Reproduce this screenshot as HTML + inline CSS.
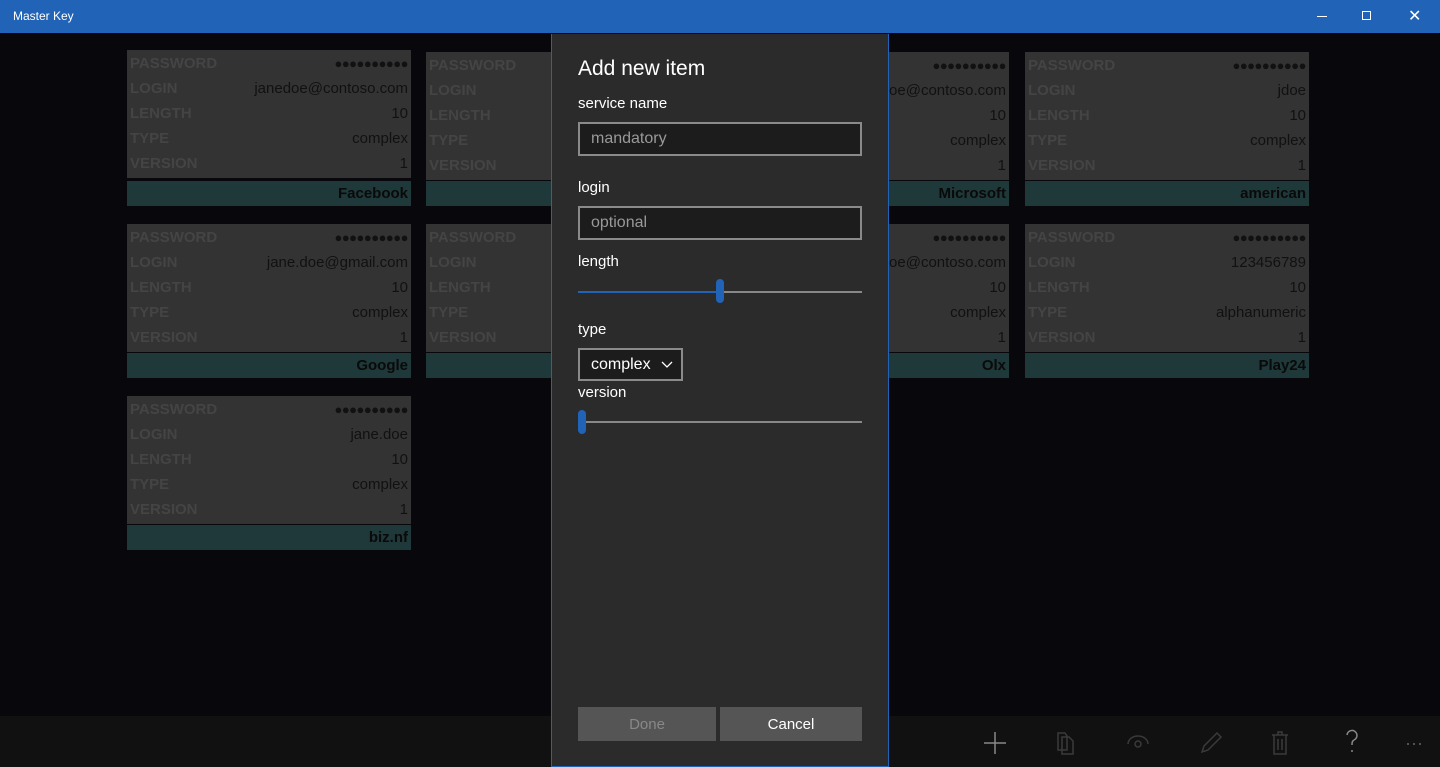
<!DOCTYPE html>
<html><head><meta charset="utf-8"><style>
*{margin:0;padding:0;box-sizing:border-box}
body{width:1440px;height:767px;background:#07070c;position:relative;overflow:hidden;font-family:"Segoe UI","Liberation Sans",sans-serif}
.tb{position:absolute;left:0;top:0;width:1440px;height:33px;background:#2163b7;color:#fff;font-size:12px}
.card{position:absolute;width:284px;height:128px;background:#333}
.r{position:absolute;left:3px;right:3px;height:25px;font-size:15px;line-height:27px}
.r b{color:#444;font-weight:bold;font-size:15px}
.r span{position:absolute;right:0;top:0;color:#111}
.r span.d{font-size:13px;letter-spacing:-0.5px}
.bar{position:absolute;width:284px;height:25px;background:#1f3839;color:#0a0a0a;font-weight:bold;font-size:15px;line-height:25px;text-align:right;padding-right:3px}
.app{position:absolute;left:0;top:716px;width:1440px;height:51px;background:#111}
.dlg{position:absolute;left:551px;top:34px;width:338px;height:733px;background:#2b2b2b;border:1px solid #2163b7;border-top:none;color:#fff}
.lbl{position:absolute;left:26px;font-size:15px}
.inp{position:absolute;left:26px;width:284px;height:34px;border:2px solid #8a8a8a;background:#1c1c1c;color:#999;font-size:16px;line-height:30px;padding-left:11px}
.btn{position:absolute;top:673px;height:34px;background:#555;font-size:15px;line-height:36px;text-align:center}
</style></head><body>
<div class="tb"><div style="position:absolute;left:13px;top:9px">Master Key</div>
<div style="position:absolute;left:1317px;top:16px;width:10px;height:1px;background:#fff"></div>
<div style="position:absolute;left:1362px;top:11px;width:9px;height:9px;border:1px solid #fff"></div>
<div style="position:absolute;left:1408px;top:6px;font-size:16px">✕</div></div>

<!-- col1 -->
<div class="card" style="left:127px;top:50px">
<div class="r" style="top:0"><b>PASSWORD</b><span class="d">●●●●●●●●●●</span></div>
<div class="r" style="top:25px"><b>LOGIN</b><span>janedoe@contoso.com</span></div>
<div class="r" style="top:50px"><b>LENGTH</b><span>10</span></div>
<div class="r" style="top:75px"><b>TYPE</b><span>complex</span></div>
<div class="r" style="top:100px"><b>VERSION</b><span>1</span></div></div>
<div class="bar" style="left:127px;top:181px">Facebook</div>
<div class="card" style="left:127px;top:224px">
<div class="r" style="top:0"><b>PASSWORD</b><span class="d">●●●●●●●●●●</span></div>
<div class="r" style="top:25px"><b>LOGIN</b><span>jane.doe@gmail.com</span></div>
<div class="r" style="top:50px"><b>LENGTH</b><span>10</span></div>
<div class="r" style="top:75px"><b>TYPE</b><span>complex</span></div>
<div class="r" style="top:100px"><b>VERSION</b><span>1</span></div></div>
<div class="bar" style="left:127px;top:353px">Google</div>
<div class="card" style="left:127px;top:396px">
<div class="r" style="top:0"><b>PASSWORD</b><span class="d">●●●●●●●●●●</span></div>
<div class="r" style="top:25px"><b>LOGIN</b><span>jane.doe</span></div>
<div class="r" style="top:50px"><b>LENGTH</b><span>10</span></div>
<div class="r" style="top:75px"><b>TYPE</b><span>complex</span></div>
<div class="r" style="top:100px"><b>VERSION</b><span>1</span></div></div>
<div class="bar" style="left:127px;top:525px">biz.nf</div>
<!-- col2 -->
<div class="card" style="left:426px;top:52px">
<div class="r" style="top:0"><b>PASSWORD</b></div><div class="r" style="top:25px"><b>LOGIN</b></div><div class="r" style="top:50px"><b>LENGTH</b></div><div class="r" style="top:75px"><b>TYPE</b></div><div class="r" style="top:100px"><b>VERSION</b></div></div>
<div class="bar" style="left:426px;top:181px"></div>
<div class="card" style="left:426px;top:224px">
<div class="r" style="top:0"><b>PASSWORD</b></div><div class="r" style="top:25px"><b>LOGIN</b></div><div class="r" style="top:50px"><b>LENGTH</b></div><div class="r" style="top:75px"><b>TYPE</b></div><div class="r" style="top:100px"><b>VERSION</b></div></div>
<div class="bar" style="left:426px;top:353px"></div>
<!-- col3 -->
<div class="card" style="left:725px;top:52px">
<div class="r" style="top:0"><span class="d">●●●●●●●●●●</span></div>
<div class="r" style="top:25px"><span>janedoe@contoso.com</span></div>
<div class="r" style="top:50px"><span>10</span></div>
<div class="r" style="top:75px"><span>complex</span></div>
<div class="r" style="top:100px"><span>1</span></div></div>
<div class="bar" style="left:725px;top:181px">Microsoft</div>
<div class="card" style="left:725px;top:224px">
<div class="r" style="top:0"><span class="d">●●●●●●●●●●</span></div>
<div class="r" style="top:25px"><span>janedoe@contoso.com</span></div>
<div class="r" style="top:50px"><span>10</span></div>
<div class="r" style="top:75px"><span>complex</span></div>
<div class="r" style="top:100px"><span>1</span></div></div>
<div class="bar" style="left:725px;top:353px">Olx</div>
<!-- col4 -->
<div class="card" style="left:1025px;top:52px">
<div class="r" style="top:0"><b>PASSWORD</b><span class="d">●●●●●●●●●●</span></div>
<div class="r" style="top:25px"><b>LOGIN</b><span>jdoe</span></div>
<div class="r" style="top:50px"><b>LENGTH</b><span>10</span></div>
<div class="r" style="top:75px"><b>TYPE</b><span>complex</span></div>
<div class="r" style="top:100px"><b>VERSION</b><span>1</span></div></div>
<div class="bar" style="left:1025px;top:181px">american</div>
<div class="card" style="left:1025px;top:224px">
<div class="r" style="top:0"><b>PASSWORD</b><span class="d">●●●●●●●●●●</span></div>
<div class="r" style="top:25px"><b>LOGIN</b><span>123456789</span></div>
<div class="r" style="top:50px"><b>LENGTH</b><span>10</span></div>
<div class="r" style="top:75px"><b>TYPE</b><span>alphanumeric</span></div>
<div class="r" style="top:100px"><b>VERSION</b><span>1</span></div></div>
<div class="bar" style="left:1025px;top:353px">Play24</div>

<div class="app">
<svg width="1440" height="51" style="position:absolute;left:0;top:0" fill="none" stroke-width="1.5">
<path d="M995 16V38M984 27H1006" stroke="#888"/>
<g stroke="#3a3a3a"><path d="M1058 17h7l2 3v14h-9z M1062 21h7l4 4v13h-11z"/>
<path d="M1128 28a10 8 0 0 1 20 0"/><circle cx="1138" cy="28" r="3"/>
<path d="M1202 36l2-6 13-13 4 4-13 13z"/>
<path d="M1272 19h16M1278 19v-3h4v3M1274 19v19h12v-19M1278 23v11M1282 23v11"/></g>
<path d="M1347 19a5 5 0 1 1 7 5c-2 1-2 3-2 5M1352 34v2" stroke="#888"/>
<g fill="#666"><circle cx="1408" cy="28" r="1"/><circle cx="1414" cy="28" r="1"/><circle cx="1420" cy="28" r="1"/></g>
</svg></div>

<div class="dlg">
<div style="position:absolute;left:26px;top:23px;font-size:21px">Add new item</div>
<div class="lbl" style="top:61px">service name</div>
<div class="inp" style="top:88px">mandatory</div>
<div class="lbl" style="top:145px">login</div>
<div class="inp" style="top:172px">optional</div>
<div class="lbl" style="top:219px">length</div>
<div style="position:absolute;left:26px;top:257px;width:142px;height:2px;background:#2163b7"></div>
<div style="position:absolute;left:168px;top:257px;width:142px;height:2px;background:#888"></div>
<div style="position:absolute;left:164px;top:245px;width:8px;height:24px;border-radius:4px;background:#2163b7"></div>
<div class="lbl" style="top:287px">type</div>
<div style="position:absolute;left:26px;top:314px;width:105px;height:33px;border:2px solid #8a8a8a;background:#1c1c1c;font-size:16px;line-height:30px;padding-left:11px">complex
<svg width="12" height="8" style="position:absolute;left:81px;top:11px"><path d="M1 1l5 5 5-5" stroke="#fff" fill="none" stroke-width="1.3"/></svg></div>
<div class="lbl" style="top:350px">version</div>
<div style="position:absolute;left:26px;top:387px;width:284px;height:2px;background:#888"></div>
<div style="position:absolute;left:26px;top:376px;width:8px;height:24px;border-radius:4px;background:#2163b7"></div>
<div class="btn" style="left:26px;width:138px;color:#888">Done</div>
<div class="btn" style="left:168px;width:142px;color:#fff">Cancel</div>
</div>
</body></html>
